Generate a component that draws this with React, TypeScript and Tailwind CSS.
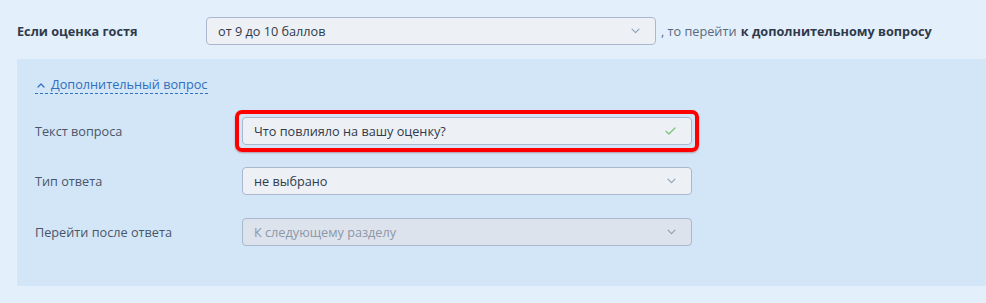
import React from "react";

function Chevron({ className = "" }: { className?: string }) {
  return (
    <svg width="9" height="6" viewBox="0 0 9 6" fill="none" className={className}>
      <path d="M1 1.2L4.5 4.6L8 1.2" stroke="#8d9db6" strokeWidth="1.1" strokeLinecap="round" strokeLinejoin="round" />
    </svg>
  );
}

function Check() {
  return (
    <svg width="11" height="8" viewBox="0 0 11 8" fill="none">
      <path d="M1 4.2L3.9 7L10 1" stroke="#7ec27a" strokeWidth="1.3" strokeLinecap="round" strokeLinejoin="round" />
    </svg>
  );
}

function Field({
  value,
  disabled = false,
  icon,
  width = "w-[450px]",
}: {
  value: string;
  disabled?: boolean;
  icon?: React.ReactNode;
  width?: string;
}) {
  return (
    <div
      className={`${width} h-[28px] flex items-center justify-between rounded-[4px] border border-[#a9b8cf] pl-[11px] pr-[15px] ${
        disabled ? "bg-[#dde3ec] text-[#8c97a8]" : "bg-[#edf1f5] text-[#2f3a4b]"
      }`}
    >
      <span>{value}</span>
      {icon ?? <Chevron />}
    </div>
  );
}

export default function App() {
  return (
    <div className="min-h-[303px] bg-[#e3f0fc] font-['Open_Sans',sans-serif] text-[12.7px] leading-[18px]">
      <div className="flex items-center pl-[17px] pt-[17px] pb-[14px]">
        <div className="w-[189px] font-bold text-[#2f3a4b]">Если оценка гостя</div>
        <Field value="от 9 до 10 баллов" width="w-[450px] h-[27px]" />
        <span className="ml-[5px] text-[#5b687b]">
          , то перейти <b className="ml-[1px] text-[#2f3a4b]">к дополнительному вопросу</b>
        </span>
      </div>

      <div className="ml-[17px] bg-[#d3e6f7] pl-[18px] pt-[17px] pb-[40px]">
        <div className="flex">
          <a className="flex items-center gap-[6px] border-b border-dashed border-[#2f72c2] leading-[17px] text-[#2f6fbd] pl-[2px] pr-[1px]">
            <svg width="8" height="5" viewBox="0 0 8 5" fill="none" className="mt-[1px]">
              <path d="M1 4L4 1L7 4" stroke="#2f6fbd" strokeWidth="1.2" strokeLinecap="round" strokeLinejoin="round" />
            </svg>
            Дополнительный вопрос
          </a>
        </div>

        <div className="mt-[23px] flex items-center text-[#4a5568]">
          <div className="w-[207px]">Текст вопроса</div>
          <div className="-m-[7px] rounded-[7px] border-4 border-[#ff0000] p-[3px] shadow-[0_1px_2px_rgba(120,0,0,0.35)]">
            <Field value="Что повлияло на вашу оценку?" icon={<Check />} />
          </div>
        </div>

        <div className="mt-[22px] flex items-center text-[#4a5568]">
          <div className="w-[207px]">Тип ответа</div>
          <Field value="не выбрано" />
        </div>

        <div className="mt-[23px] flex items-center text-[#4a5568]">
          <div className="w-[207px]">Перейти после ответа</div>
          <Field value="К следующему разделу" disabled />
        </div>
      </div>
    </div>
  );
}
